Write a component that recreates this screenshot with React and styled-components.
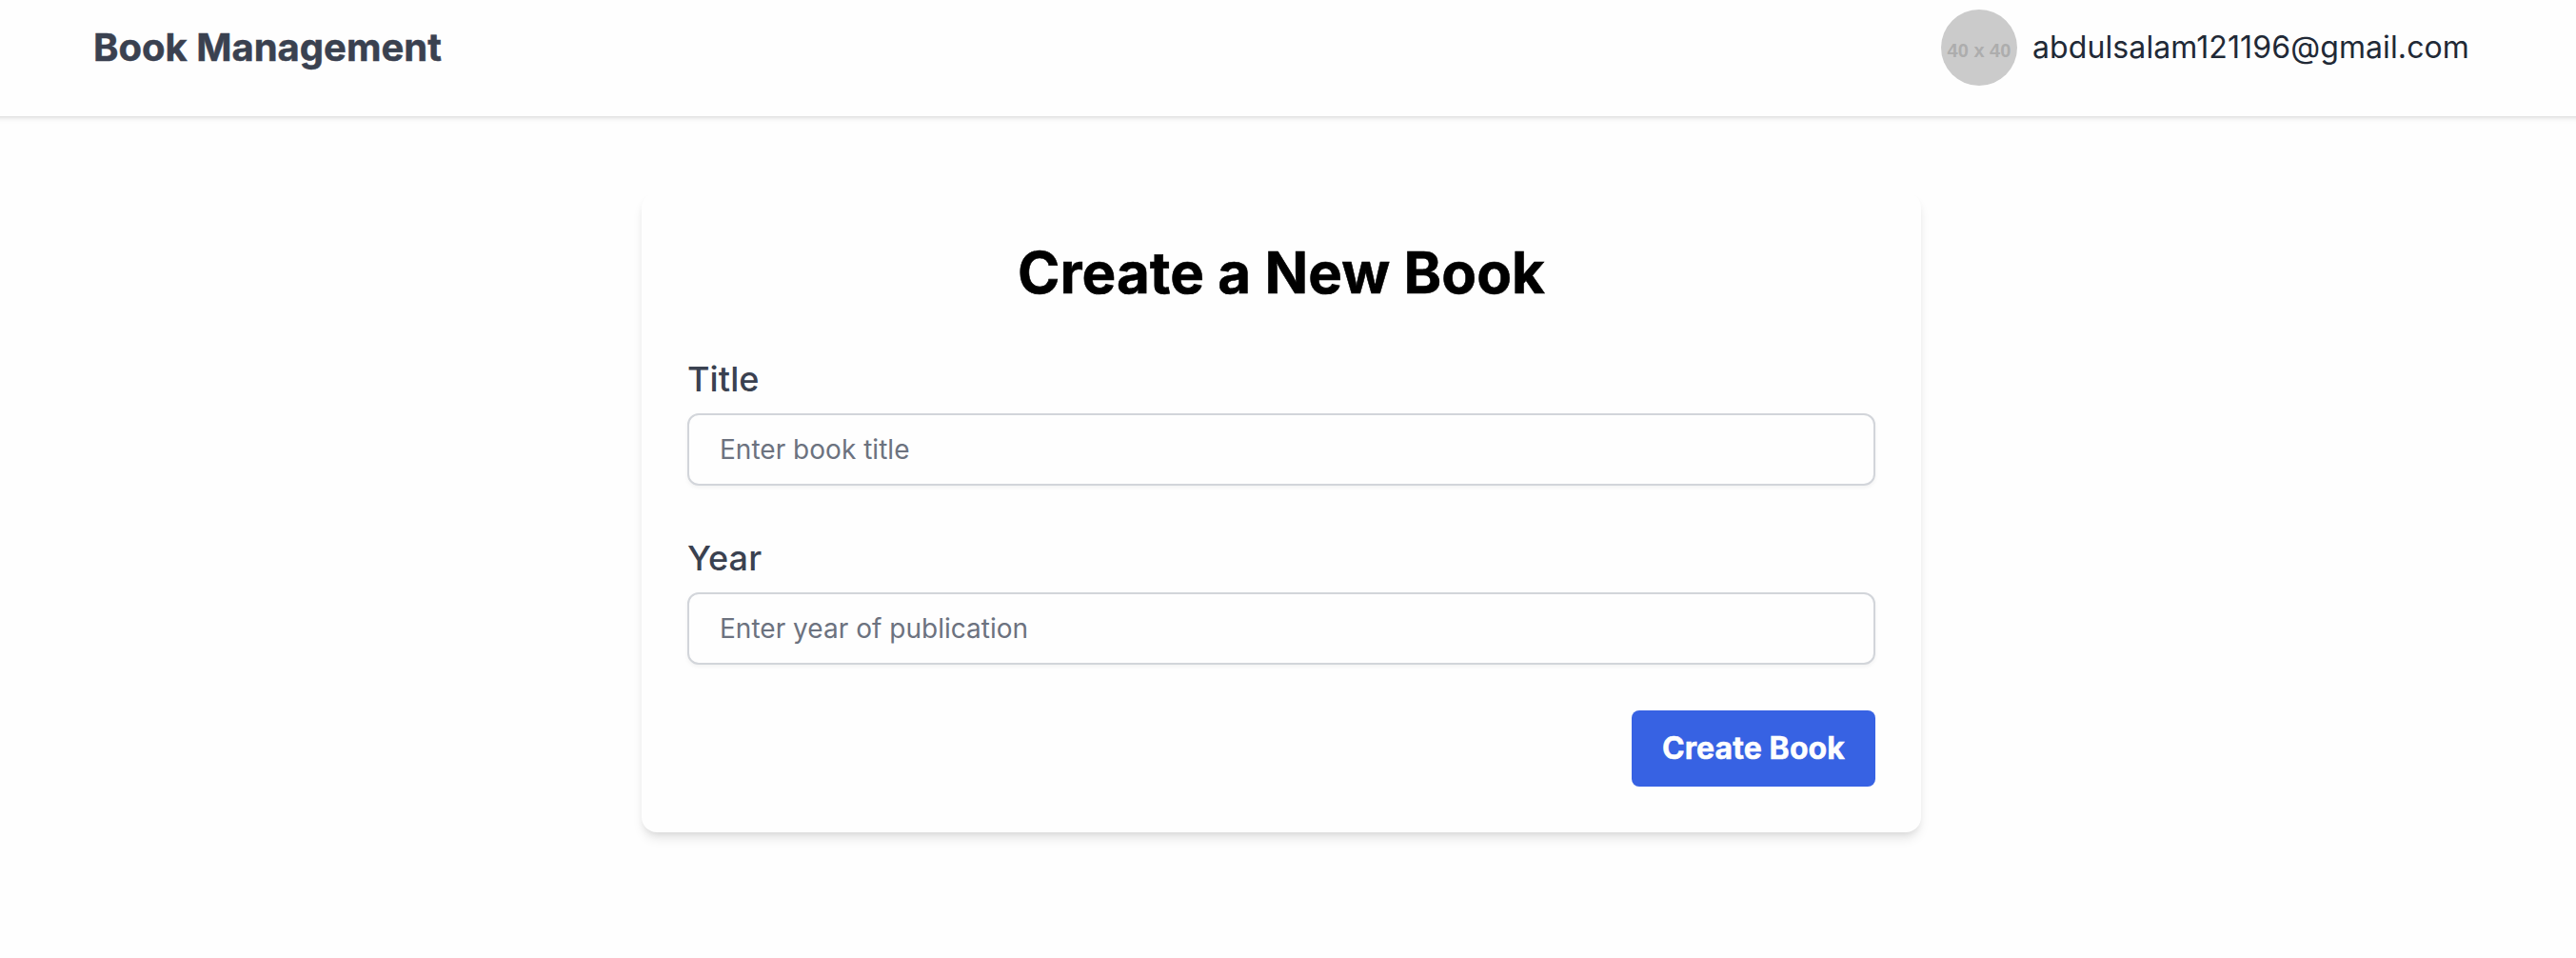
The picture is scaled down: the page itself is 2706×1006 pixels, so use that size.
import React from "react";
import styled, { createGlobalStyle } from "styled-components";

const GlobalStyle = createGlobalStyle`
  *, *::before, *::after { box-sizing: border-box; }
  body {
    margin: 0;
    background: #fefefe;
    font-family: Inter, "Liberation Sans", sans-serif;
    -webkit-font-smoothing: antialiased;
  }
`;

const Page = styled.div`
  min-height: 1006px;
  overflow-x: clip;
`;

const Header = styled.header`
  display: flex;
  align-items: flex-start;
  justify-content: space-between;
  height: 122px;
  margin: 0 -16px;
  padding: 10px 128px 32px 114px;
  background: #fefefe;
  box-shadow: 0 2px 6px 0 rgba(0, 0, 0, 0.1), 0 2px 4px -2px rgba(0, 0, 0, 0.1);
`;

const Brand = styled.h1`
  margin: 0;
  padding: 12px 0;
  color: #3a4150;
  font-size: 40px;
  line-height: 56px;
  font-weight: 700;
  -webkit-text-stroke: 0.5px currentColor;
`;

const User = styled.div`
  display: flex;
  align-items: center;
  gap: 16px;
`;

const Avatar = styled.div`
  display: flex;
  align-items: center;
  justify-content: center;
  width: 80px;
  height: 80px;
  padding-top: 6px;
  border-radius: 50%;
  background: #cbcbcb;
  color: #adadad;
  font: 700 20px/24px "Liberation Sans", sans-serif;
  white-space: nowrap;
`;

const Email = styled.span`
  color: #212936;
  font-size: 32px;
  line-height: 48px;
  letter-spacing: 0.11px;
`;

const Main = styled.main`
  display: flex;
  justify-content: center;
  padding: 80px 14px 0 0;
`;

const Card = styled.section`
  width: 1344px;
  padding: 48px;
  border-radius: 16px;
  background: #fefefe;
  box-shadow: 0 8px 12px -2px rgba(0, 0, 0, 0.1), 0 4px 8px -4px rgba(0, 0, 0, 0.1);
`;

const CardTitle = styled.h2`
  margin: 0 0 48px;
  color: #000;
  font-size: 60px;
  line-height: 72px;
  font-weight: 700;
  letter-spacing: 0.06px;
  text-align: center;
  -webkit-text-stroke: 0.6px currentColor;
`;

const Form = styled.form`
  display: flex;
  flex-direction: column;
  gap: 48px;
`;

const Field = styled.div`
  display: flex;
  flex-direction: column;
  gap: 8px;
`;

const Label = styled.label`
  color: #3a4150;
  font-size: 36px;
  line-height: 56px;
  font-weight: 500;
  letter-spacing: 0.1px;
`;

const Input = styled.input`
  width: 100%;
  height: 76px;
  padding: 16px 32px;
  border: 2px solid #d2d5da;
  border-radius: 12px;
  background: #fefefe;
  box-shadow: 0 2px 4px 0 rgba(0, 0, 0, 0.05);
  color: #111827;
  font-family: inherit;
  font-size: 28px;
  line-height: 40px;
  letter-spacing: 0.02px;
  &::placeholder { color: #6c727f; opacity: 1; }
`;

const Actions = styled.div`
  display: flex;
  justify-content: flex-end;
`;

const Button = styled.button`
  padding: 16px 32px;
  border: 0;
  border-radius: 8px;
  background: #3762e3;
  color: #fefefe;
  font-family: inherit;
  font-size: 32px;
  line-height: 48px;
  font-weight: 700;
  letter-spacing: 0.1px;
  -webkit-text-stroke: 0.5px currentColor;
`;

const fields = [
  { id: "title", label: "Title", placeholder: "Enter book title" },
  { id: "year", label: "Year", placeholder: "Enter year of publication" },
];

export default function App() {
  return (
    <Page>
      <GlobalStyle />
      <Header>
        <Brand>Book Management</Brand>
        <User>
          <Avatar>40 x 40</Avatar>
          <Email>abdulsalam121196@gmail.com</Email>
        </User>
      </Header>
      <Main>
        <Card>
          <CardTitle>Create a New Book</CardTitle>
          <Form>
            {fields.map(({ id, label, placeholder }) => (
              <Field key={id}>
                <Label htmlFor={id}>{label}</Label>
                <Input id={id} placeholder={placeholder} />
              </Field>
            ))}
            <Actions>
              <Button type="button">Create Book</Button>
            </Actions>
          </Form>
        </Card>
      </Main>
    </Page>
  );
}
